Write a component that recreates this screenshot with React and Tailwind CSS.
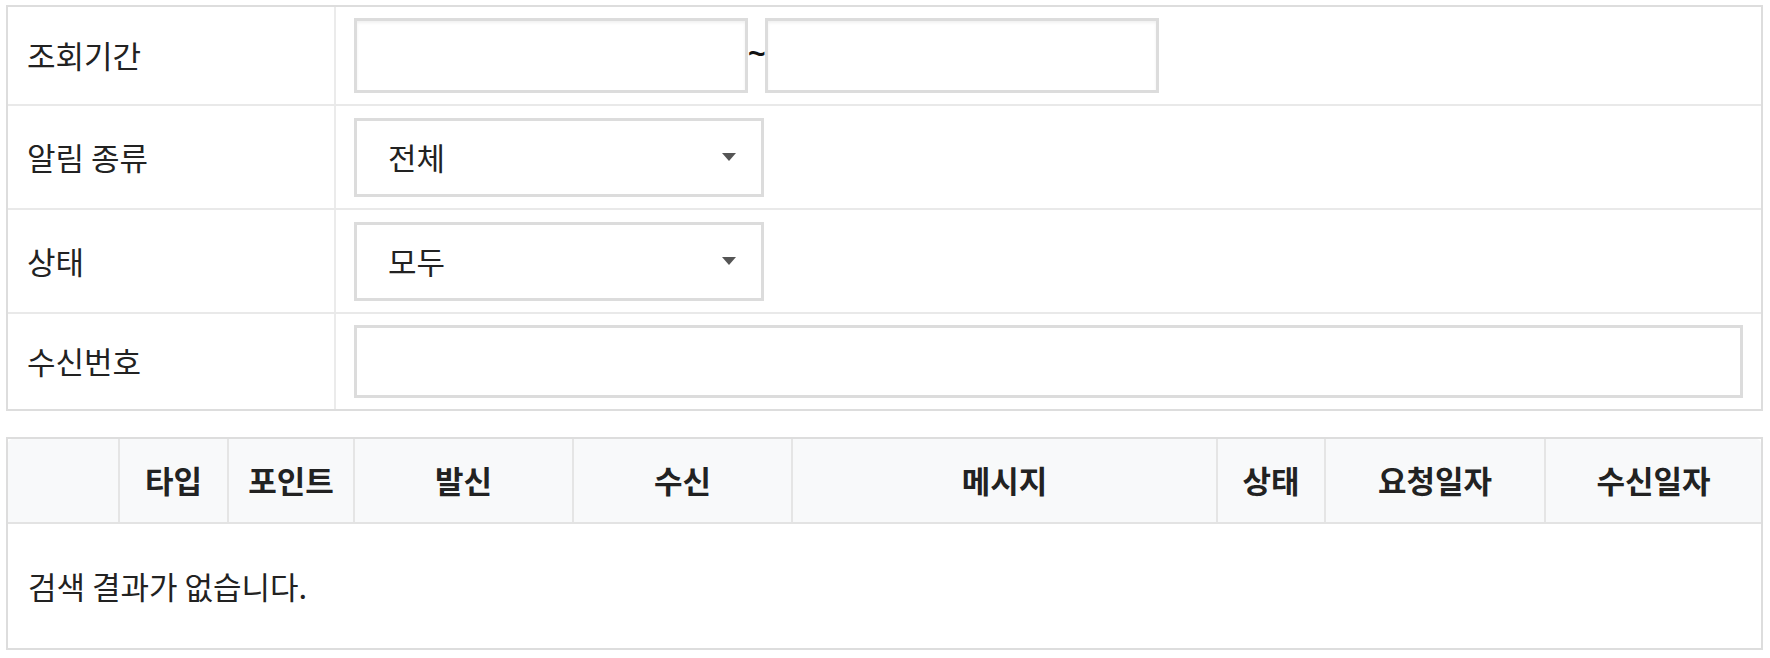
const columns = [
  { label: "", width: "110px" },
  { label: "타입", width: "109px" },
  { label: "포인트", width: "126px" },
  { label: "발신", width: "219px" },
  { label: "수신", width: "219px" },
  { label: "메시지", width: "425px" },
  { label: "상태", width: "108px" },
  { label: "요청일자", width: "220px" },
  { label: "수신일자", width: "auto" },
];

function Caret() {
  return (
    <svg width="14" height="8" viewBox="0 0 14 8" className="shrink-0">
      <path d="M0 0h14L7 8z" fill="#555" />
    </svg>
  );
}

function SelectBox({ value }) {
  return (
    <div className="flex items-center justify-between w-[410px] h-[79px] border-[3px] border-[#dcdcdc] bg-white pl-[31px] pr-[25px]">
      <span>{value}</span>
      <Caret />
    </div>
  );
}

function FieldRow({ label, children, height, last }) {
  return (
    <div className={"flex " + (last ? "" : "border-b-2 border-[#e9e9e9]")} style={{ height }}>
      <div className="w-[328px] shrink-0 flex items-center pl-[19px] border-r-2 border-[#ebebeb]">
        {label}
      </div>
      <div className="flex-1 flex items-center px-[18px]">{children}</div>
    </div>
  );
}

export default function App() {
  return (
    <div
      className="pl-[6px] pr-[7px] pt-[5px] bg-white text-[31px] text-[#222]"
      style={{ fontFamily: '"Noto Sans CJK KR", "Noto Sans", sans-serif' }}
    >
      <div className="border-2 border-[#dddddd]">
        <FieldRow label="조회기간" height={99}>
          <input className="w-[394px] h-[75px] border-[3px] border-[#dcdcdc] shadow-[inset_0_2px_3px_rgba(0,0,0,0.06)] outline-none" />
          <span className="w-[17px] text-center leading-none text-[30px] font-bold text-[#111] font-['Liberation_Sans',sans-serif] -mt-[4px]">~</span>
          <input className="w-[394px] h-[75px] border-[3px] border-[#dcdcdc] shadow-[inset_0_2px_3px_rgba(0,0,0,0.06)] outline-none" />
        </FieldRow>
        <FieldRow label="알림 종류" height={104}>
          <SelectBox value="전체" />
        </FieldRow>
        <FieldRow label="상태" height={104}>
          <SelectBox value="모두" />
        </FieldRow>
        <FieldRow label="수신번호" height={95} last>
          <input className="w-full h-[73px] border-[3px] border-[#dcdcdc] outline-none" />
        </FieldRow>
      </div>

      <div className="mt-[26px] border-2 border-[#dddddd]">
        <div
          className="grid h-[85px] bg-[#f8f9fa] border-b-2 border-[#e3e3e3] rounded-t-[5px]"
          style={{ gridTemplateColumns: columns.map((c) => (c.width === "auto" ? "1fr" : c.width)).join(" ") }}
        >
          {columns.map((col, idx) => (
            <div
              key={idx}
              className={
                "flex items-center justify-center font-bold " +
                (idx > 0 ? "border-l-2 border-[#e5e5e5]" : "")
              }
            >
              {col.label}
            </div>
          ))}
        </div>
        <div className="h-[124px] flex items-center pl-[20px]">검색 결과가 없습니다.</div>
      </div>
    </div>
  );
}
